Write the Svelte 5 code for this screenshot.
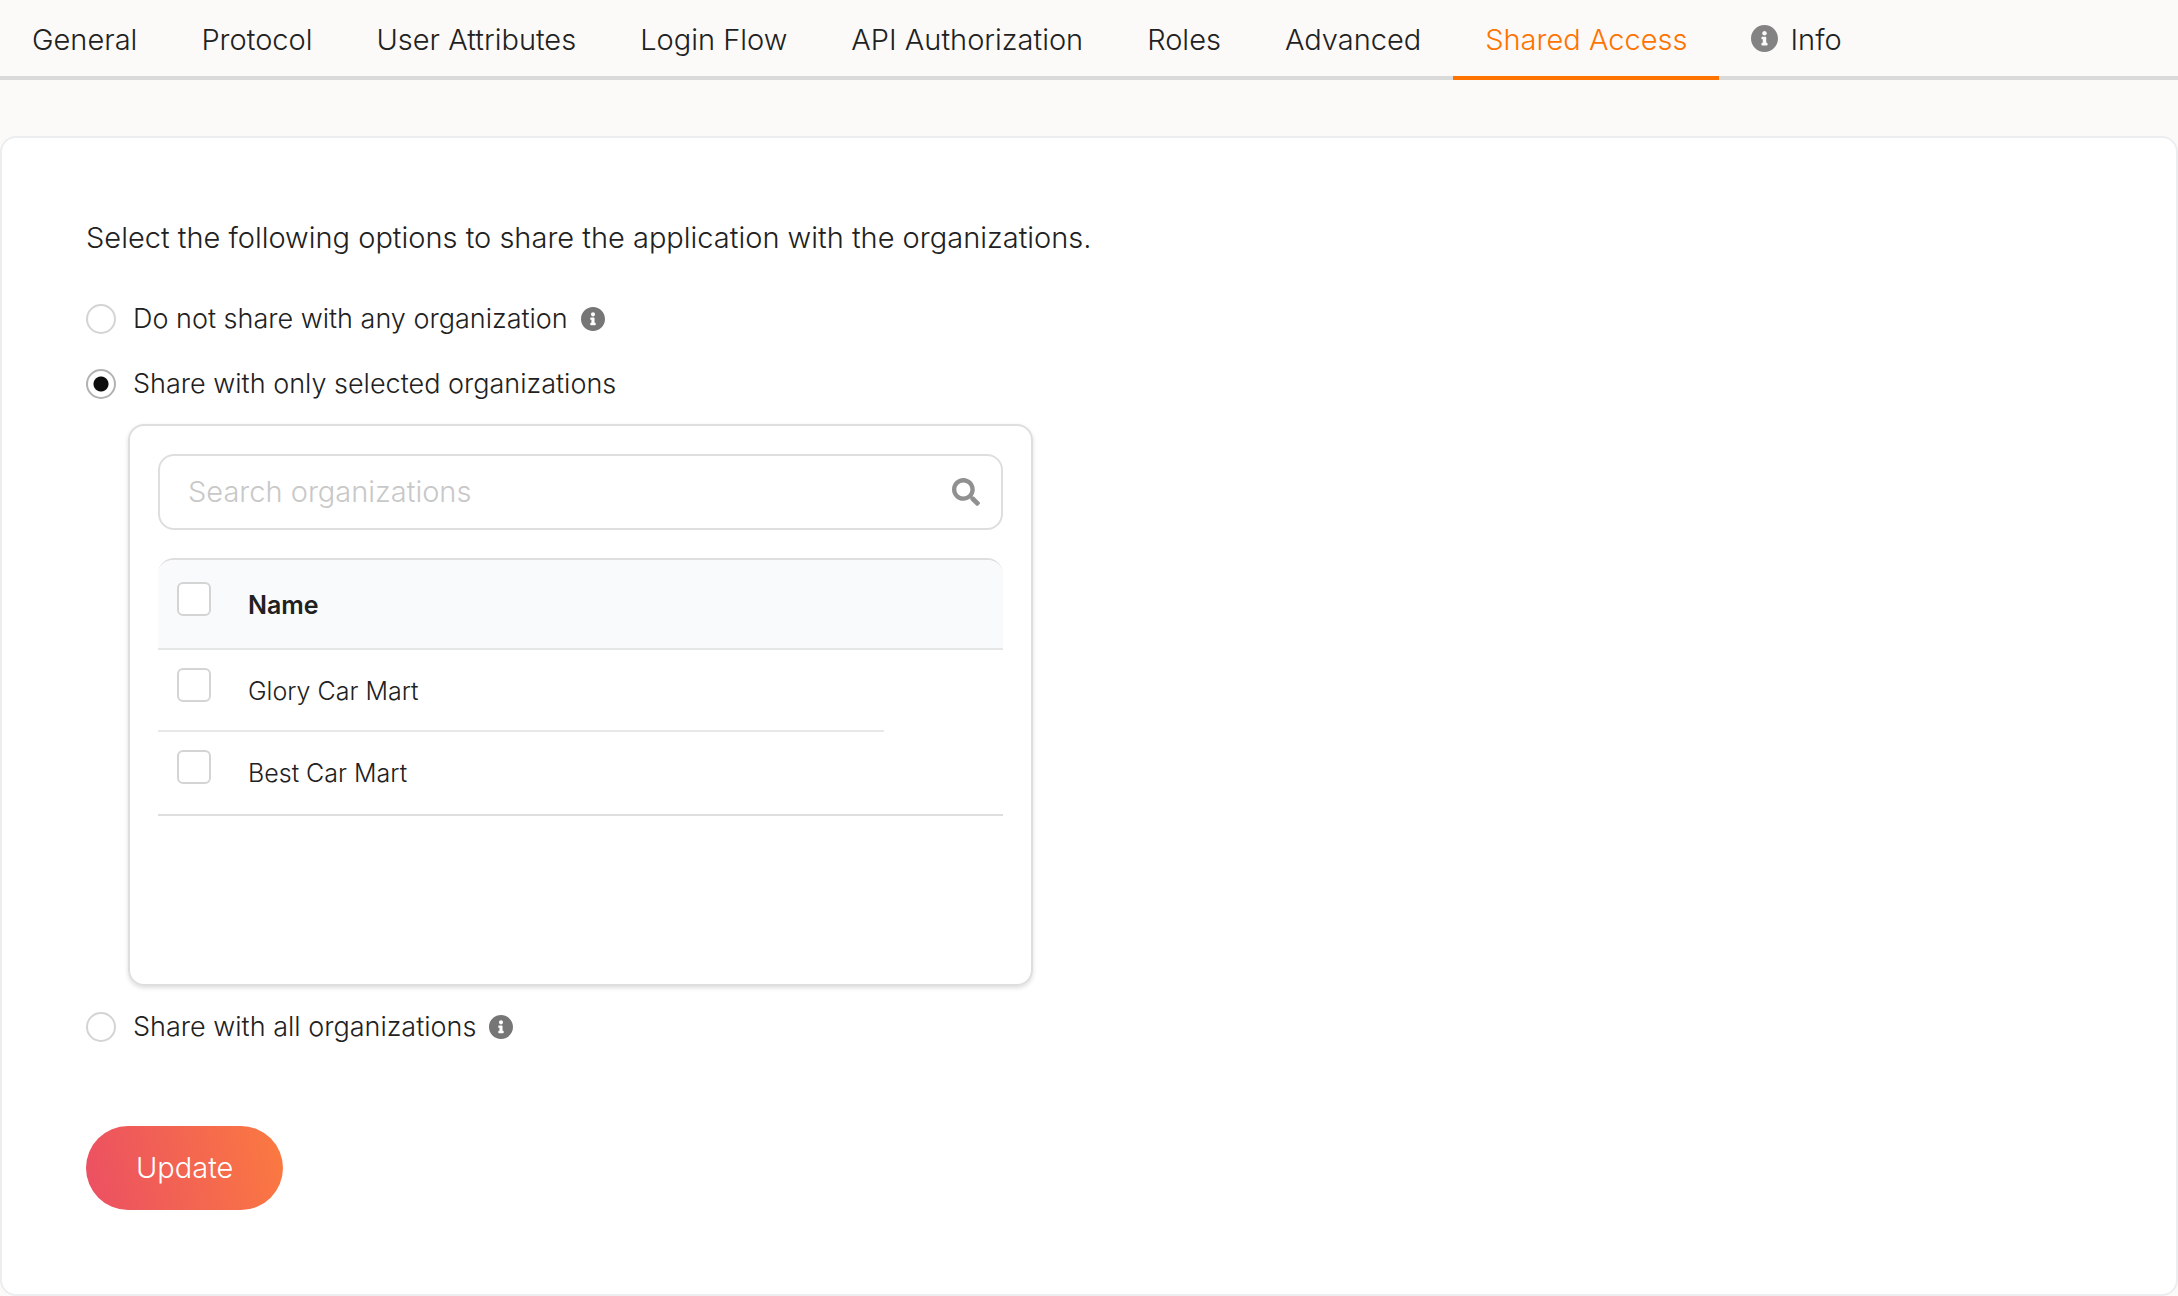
<script>
  const tabs = [
    "General",
    "Protocol",
    "User Attributes",
    "Login Flow",
    "API Authorization",
    "Roles",
    "Advanced",
    "Shared Access",
  ];
  const active = "Shared Access";
  const organizations = ["Glory Car Mart", "Best Car Mart"];

  let mode = $state("selected");
  let query = $state("");
  let picked = $state([]);

  const shown = $derived(
    organizations.filter((name) => name.toLowerCase().includes(query.toLowerCase()))
  );

  function toggleAll(event) {
    picked = event.currentTarget.checked ? [...organizations] : [];
  }
</script>

{#snippet infoIcon()}
  <svg class="info" viewBox="8 8 496 496" aria-hidden="true">
    <path
      d="M256 8C119.043 8 8 119.083 8 256c0 136.997 111.043 248 248 248s248-111.003 248-248C504 119.083 392.957 8 256 8zm0 110c23.196 0 42 18.804 42 42s-18.804 42-42 42-42-18.804-42-42 18.804-42 42-42zm56 254c0 6.627-5.373 12-12 12h-88c-6.627 0-12-5.373-12-12v-24c0-6.627 5.373-12 12-12h12v-64h-12c-6.627 0-12-5.373-12-12v-24c0-6.627 5.373-12 12-12h64c6.627 0 12 5.373 12 12v100h12c6.627 0 12 5.373 12 12v24z"
    />
  </svg>
{/snippet}

<nav class="tabs" aria-label="Application settings">
  {#each tabs as tab}
    <a class="tab" class:active={tab === active} href="#{tab.toLowerCase().replaceAll(' ', '-')}">{tab}</a>
  {/each}
  <a class="tab" href="#info">{@render infoIcon()}Info</a>
</nav>

<main class="card">
  <form onsubmit={(event) => event.preventDefault()}>
    <fieldset>
      <legend>Select the following options to share the application with the organizations.</legend>

      <label class="option">
        <input type="radio" name="share" value="none" bind:group={mode} />
        <span>Do not share with any organization</span>
        {@render infoIcon()}
      </label>

      <label class="option">
        <input type="radio" name="share" value="selected" bind:group={mode} />
        <span>Share with only selected organizations</span>
      </label>

      {#if mode === "selected"}
        <section class="picker">
          <div class="search">
            <input
              type="text"
              placeholder="Search organizations"
              aria-label="Search organizations"
              bind:value={query}
            />
            <svg viewBox="0 0 512 512" aria-hidden="true">
              <path
                d="M505 442.7L405.3 343c-4.5-4.5-10.6-7-17-7H372c27.6-35.3 44-79.7 44-128C416 93.1 322.9 0 208 0S0 93.1 0 208s93.1 208 208 208c48.3 0 92.7-16.4 128-44v16.3c0 6.4 2.5 12.5 7 17l99.7 99.7c9.4 9.4 24.6 9.4 33.9 0l28.3-28.3c9.4-9.4 9.4-24.6.1-34zM208 336c-70.7 0-128-57.2-128-128 0-70.7 57.2-128 128-128 70.7 0 128 57.2 128 128 0 70.7-57.2 128-128 128z"
              />
            </svg>
          </div>

          <table>
            <thead>
              <tr>
                <th class="check">
                  <input
                    type="checkbox"
                    aria-label="Select all organizations"
                    checked={picked.length === organizations.length}
                    onchange={toggleAll}
                  />
                </th>
                <th class="name" scope="col">Name</th>
                <th class="actions"></th>
              </tr>
            </thead>
            <tbody>
              {#each shown as name}
                <tr>
                  <td class="check">
                    <input type="checkbox" value={name} aria-label={name} bind:group={picked} />
                  </td>
                  <td class="name">{name}</td>
                  <td class="actions"></td>
                </tr>
              {/each}
            </tbody>
          </table>
        </section>
      {/if}

      <label class="option">
        <input type="radio" name="share" value="all" bind:group={mode} />
        <span>Share with all organizations</span>
        {@render infoIcon()}
      </label>
    </fieldset>

    <button class="update" type="submit">Update</button>
  </form>
</main>

<style>
  :global(body) {
    margin: 0;
    background: #fbfaf8;
    color: #212121;
    font-family: Inter, "Open Sans", sans-serif;
    font-size: 29px;
    font-weight: 300;
  }

  .tabs {
    display: flex;
    box-sizing: border-box;
    height: 80px;
    box-shadow: inset 0 -4px #d9dad9;
  }

  .tab {
    display: flex;
    align-items: center;
    gap: 12px;
    padding: 4px 32px 0;
    border-bottom: 4px solid transparent;
    color: inherit;
    line-height: 40px;
    text-decoration: none;
    white-space: nowrap;
  }

  .tab.active {
    border-color: #ff7300;
    color: #ff7300;
  }

  .info {
    flex: none;
    width: 24px;
    height: 24px;
    fill: #767676;
  }

  .tab .info {
    width: 27px;
    height: 27px;
    margin-bottom: 4px;
    fill: #838383;
  }

  .card {
    box-sizing: border-box;
    margin-top: 56px;
    padding: 80px 84px 84px;
    border: 2px solid #ecedef;
    border-radius: 16px;
    background: #fff;
  }

  fieldset {
    min-width: 0;
    margin: 0;
    padding: 0;
    border: 0;
  }

  legend {
    margin-bottom: 41px;
    padding: 0;
    line-height: 40px;
  }

  .option {
    display: flex;
    align-items: center;
    width: fit-content;
    margin-bottom: 25px;
    font-size: 27px;
    line-height: 40px;
  }

  .option .info {
    margin-left: 13px;
  }

  input {
    font: inherit;
  }

  input[type="radio"],
  input[type="checkbox"] {
    flex: none;
    appearance: none;
    box-sizing: border-box;
    margin: 0;
    border: 2px solid #d4d4d5;
    background: #fff;
  }

  input[type="radio"] {
    width: 30px;
    height: 30px;
    margin-right: 17px;
    border-radius: 50%;
  }

  input[type="radio"]:checked {
    border-color: #b1b2b3;
    background: radial-gradient(circle, #0d0d0d 7px, #fff 8px);
  }

  input[type="checkbox"] {
    display: block;
    width: 34px;
    height: 34px;
    border-radius: 6px;
  }

  input[type="checkbox"]:checked {
    background: radial-gradient(#212121 9px, #fff 10px);
  }

  .picker {
    box-sizing: border-box;
    width: 100%;
    max-width: 905px;
    min-height: 562px;
    margin: -5px 0 21px 42px;
    padding: 28px;
    border: 2px solid #dededf;
    border-radius: 16px;
    box-shadow: 0 2px 4px rgba(34, 36, 38, 0.15);
  }

  .search {
    display: flex;
    align-items: center;
    box-sizing: border-box;
    height: 76px;
    padding: 0 21px 0 28px;
    border: 2px solid #dededf;
    border-radius: 16px;
  }

  .search:focus-within {
    border-color: #ff7300;
  }

  .search input {
    flex: 1;
    min-width: 0;
    padding: 0;
    border: 0;
    outline: 0;
    background: none;
    color: inherit;
    line-height: 40px;
  }

  .search input::placeholder {
    color: #c8c8c8;
    opacity: 1;
  }

  .search svg {
    flex: none;
    width: 28px;
    height: 28px;
    fill: #909090;
  }

  table {
    width: 100%;
    margin-top: 28px;
    border: solid #dededf;
    border-width: 2px 0;
    border-radius: 16px 16px 0 0;
    border-spacing: 0;
    font-size: 25px;
    line-height: 32px;
  }

  th,
  td {
    box-sizing: border-box;
    padding: 0;
    text-align: left;
    vertical-align: top;
  }

  th {
    height: 90px;
    border-bottom: 2px solid #e5e6e6;
    background: #f9fafc;
    font-weight: 600;
  }

  th:first-child {
    border-top-left-radius: 16px;
  }

  th:last-child {
    border-top-right-radius: 16px;
  }

  td {
    height: 82px;
  }

  tbody tr:not(:last-child) td:not(.actions) {
    border-bottom: 2px solid #e8e8e8;
  }

  th.check {
    padding: 22px 0 0 19px;
  }

  td.check {
    padding: 18px 0 0 19px;
  }

  .check {
    width: 90px;
  }

  th.name {
    padding-top: 29px;
  }

  td.name {
    padding-top: 25px;
  }

  .actions {
    width: 119px;
  }

  .update {
    margin-top: 54px;
    padding: 0 50px;
    border: 0;
    border-radius: 42px;
    background: linear-gradient(77deg, #eb4f63, #fb7a40);
    color: #fff;
    font: inherit;
    line-height: 84px;
    cursor: pointer;
  }
</style>
